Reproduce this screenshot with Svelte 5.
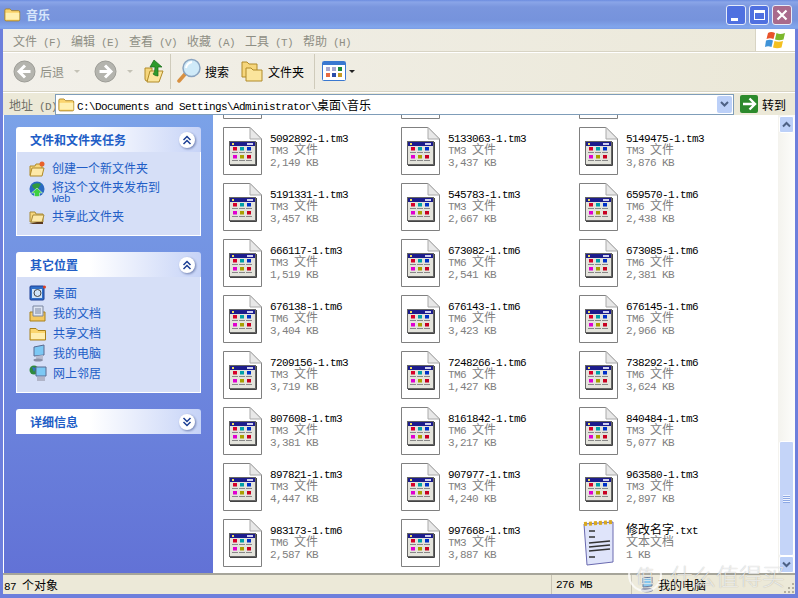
<script>
  const files = [
    ['', '', ''], ['', '', ''], ['', '', ''],
    ['5092892-1.tm3', 'TM3 文件', '2,149 KB'], ['5133063-1.tm3', 'TM3 文件', '3,437 KB'], ['5149475-1.tm3', 'TM3 文件', '3,876 KB'],
    ['5191331-1.tm3', 'TM3 文件', '3,457 KB'], ['545783-1.tm3', 'TM3 文件', '2,667 KB'], ['659570-1.tm6', 'TM6 文件', '2,438 KB'],
    ['666117-1.tm3', 'TM3 文件', '1,519 KB'], ['673082-1.tm6', 'TM6 文件', '2,541 KB'], ['673085-1.tm6', 'TM6 文件', '2,381 KB'],
    ['676138-1.tm6', 'TM6 文件', '3,404 KB'], ['676143-1.tm6', 'TM6 文件', '3,423 KB'], ['676145-1.tm6', 'TM6 文件', '2,966 KB'],
    ['7209156-1.tm3', 'TM3 文件', '3,719 KB'], ['7248266-1.tm6', 'TM6 文件', '1,427 KB'], ['738292-1.tm6', 'TM6 文件', '3,624 KB'],
    ['807608-1.tm3', 'TM3 文件', '3,381 KB'], ['8161842-1.tm6', 'TM6 文件', '3,217 KB'], ['840484-1.tm3', 'TM3 文件', '5,077 KB'],
    ['897821-1.tm3', 'TM3 文件', '4,447 KB'], ['907977-1.tm3', 'TM3 文件', '4,240 KB'], ['963580-1.tm3', 'TM3 文件', '2,897 KB'],
    ['983173-1.tm6', 'TM6 文件', '2,587 KB'], ['997668-1.tm3', 'TM3 文件', '3,887 KB'], ['修改名字.txt', '文本文档', '1 KB', 'txt'],
  ];

  const menus = ['文件 (F)', '编辑 (E)', '查看 (V)', '收藏 (A)', '工具 (T)', '帮助 (H)'];
  const places = [['桌面', 'desk'], ['我的文档', 'docs'], ['共享文档', 'folder'], ['我的电脑', 'pc'], ['网上邻居', 'net']];

  // ascii is 6px wide and cjk 12px, like the bitmap font in the screenshot
  const segs = (s) =>
    (s.match(/[\u4e00-\u9fff]+|[^\u4e00-\u9fff]+/g) || []).map((t) => ({ t, cjk: /[\u4e00-\u9fff]/.test(t) }));

  const swatches = [
    [10, 20, '#d8002a'], [17, 20, '#00a0a8'], [24, 20, '#0030c8'],
    [10, 28, '#e000d0'], [17, 28, '#a8a000'], [24, 28, '#c80020'],
  ];
</script>

{#snippet txt(s)}
  {#each segs(s) as seg}<span class={seg.cjk ? 'cjk' : 'asc'}>{seg.t}</span>{/each}
{/snippet}

{#snippet folder(size)}
  <svg width={size} height={size} viewBox="0 0 20 20">
    <path d="M1 16V5q0-1.500 1.500-1.500H7L9 5.500H17q1.500 0 1.500 1.500V16q0 1.500-1.500 1.500H2.500Q1 17.500 1 16Z" fill="#fbd56e" stroke="#a8801c" />
    <path d="M2 8H18V16H2Z" fill="#fff0b0" />
  </svg>
{/snippet}

{#snippet fileIcon()}
  <svg class="ficon" width="40" height="49" viewBox="0 0 40 49">
    <path d="M.5.500H27L38.500 12V47.500H.5Z" fill="#fff" stroke="#808080" />
    <path d="M27 .5V12H38.500Z" fill="#e8e8e8" stroke="#aaa" />
    <rect x="6.500" y="14.500" width="26" height="23" fill="#e4e4dc" stroke="#666" />
    <path d="M33.500 15V38.500H7" fill="none" stroke="#444" />
    <rect x="7" y="15" width="25" height="4" fill="#1c1c8c" />
    <rect x="9" y="16" width="2" height="2" fill="#f0e060" />
    <rect x="24" y="16" width="6" height="2" fill="#d0d0f0" />
    {#each swatches as [x, y, c]}
      <rect {x} {y} width="4" height="3.500" fill={c} />
      <rect x={x - 1} y={y + 5} width="6" height="1" fill="#888" />
    {/each}
  </svg>
{/snippet}

{#snippet noteIcon()}
  <svg class="ficon" width="40" height="49" viewBox="0 0 40 49">
    <path d="M5 5L34 3V43L8 46Z" fill="#dfe4fa" stroke="#6a6ab0" />
    <path d="M5 5L34 3" stroke="#d8a820" stroke-width="4" stroke-dasharray="3 2" />
    <path d="M10 12H16M10 18H16M10 24L31 22M10 28L31 26M10 32L31 30M10 38H16" stroke="#333" stroke-width="1.500" />
  </svg>
{/snippet}

{#snippet chevrons(up)}
  <span class="chev">
    <svg width="18" height="18" viewBox="0 0 18 18">
      <circle cx="9" cy="9" r="8" fill="#fff" />
      <path d={up ? 'M5.500 9L9 5.500L12.500 9M5.500 13L9 9.500L12.500 13' : 'M5.500 5L9 8.500L12.500 5M5.500 9L9 12.500L12.500 9'} fill="none" stroke="#1c3f94" stroke-width="1.500" />
    </svg>
  </span>
{/snippet}

{#snippet placeIcon(kind)}
  <svg width="18" height="18" viewBox="0 0 18 18">
    {#if kind === 'desk'}
      <rect x="1" y="2" width="14" height="14" rx="1" fill="#2f6fc8" stroke="#1c3f94" />
      <path d="M3 5H13V14H3Z" fill="#cfe4f8" />
      <circle cx="8.500" cy="9" r="3.500" fill="none" stroke="#444" />
      <circle cx="15.500" cy="3" r="1.500" fill="#e04020" />
    {:else if kind === 'docs'}
      <path d="M1 8H16V17H1Z" fill="#f4c860" stroke="#a8801c" />
      <path d="M4 2H14V12H4Z" fill="#dfe6f4" stroke="#7a86a0" />
      <path d="M6 5H12M6 7H12M6 9H12" stroke="#7a86a0" />
    {:else if kind === 'folder'}
      <path d="M1 16V4.500H7L9 6.500H16.500V16Z" fill="#fbd56e" stroke="#a8801c" />
      <path d="M2 9H16V15H2Z" fill="#ffeeb0" />
    {:else if kind === 'pc'}
      <path d="M5 3L15 1V11L5 12Z" fill="#7cc8f4" stroke="#5a6a90" />
      <path d="M7 12V16L14 17V11Z" fill="#b8bcd0" />
      <ellipse cx="9" cy="16" rx="4.500" ry="1.500" fill="#8a90a8" />
    {:else}
      <circle cx="5" cy="6" r="4.500" fill="#2e8a3c" />
      <path d="M3 3L7 4L5 8Z" fill="#2f6fc8" />
      <path d="M7 3H17V12H7Z" fill="#7cc8f4" stroke="#5a6a90" />
      <path d="M8 13H16V17H8Z" fill="#b0b4c8" />
    {/if}
  </svg>
{/snippet}

<div class="window">
  <header class="titlebar">
    {@render folder(17)}
    <span class="title">音乐</span>
    <div class="wbtns">
      <span class="wbtn"><i class="min"></i></span>
      <span class="wbtn"><i class="max"></i></span>
      <span class="wbtn close">
        <svg width="12" height="12" viewBox="0 0 12 12"><path d="M1.500 1.500L10.500 10.500M10.500 1.500L1.500 10.500" stroke="#fff" stroke-width="2.200" /></svg>
      </span>
    </div>
  </header>

  <nav class="menubar">
    <div class="menus">
      {#each menus as m}<span class="menu">{@render txt(m)}</span>{/each}
    </div>
    <div class="flag">
      <svg width="22" height="20" viewBox="0 0 22 20">
        <path d="M3 3Q6 1 10 3L8.500 9Q5 7.500 1.500 9Z" fill="#e8532a" />
        <path d="M11.500 3Q15 5 20 3L18.500 9.500Q14 11 10 9.500Z" fill="#7cb82c" />
        <path d="M1 10.500Q5 9 8 10.500L6.500 17Q3 15.500 0 17Z" fill="#3f93d8" />
        <path d="M9.500 11Q14 12.500 18 11L16.500 17.500Q12 19 8 17.500Z" fill="#f4c020" />
      </svg>
    </div>
  </nav>

  <div class="toolbar">
    <span class="round">
      <svg width="23" height="23" viewBox="0 0 23 23">
        <circle cx="11.500" cy="11.500" r="10.500" fill="#b4b4ae" stroke="#9c9c96" />
        <path d="M12 5.500L6 11.500L12 17.500M6.500 11.500H17.500" fill="none" stroke="#fff" stroke-width="3" />
      </svg>
    </span>
    <span class="tlabel muted">后退</span>
    <i class="caret pale back"></i>
    <span class="round fwd">
      <svg width="23" height="23" viewBox="0 0 23 23">
        <circle cx="11.500" cy="11.500" r="10.500" fill="#b4b4ae" stroke="#9c9c96" />
        <path d="M11 5.500L17 11.500L11 17.500M16.500 11.500H5.500" fill="none" stroke="#fff" stroke-width="3" />
      </svg>
    </span>
    <i class="caret pale nxt"></i>
    <span class="up">
      <svg width="20" height="24" viewBox="0 0 20 24">
        <path d="M1 9H8V22H3Q1 22 1 20Z" fill="#f6d67c" stroke="#b08a28" />
        <path d="M3 23L6 12H19L15 23Z" fill="#fbe59c" stroke="#b08a28" />
        <path d="M10 1L18 8H14V17Q11 17 9 15Q11 14 11 8H6Z" fill="#2e9a2c" stroke="#156a14" stroke-width=".7" />
      </svg>
    </span>
    <i class="sep"></i>
    <span class="search">
      <svg width="25" height="26" viewBox="0 0 25 26">
        <path d="M9 15L2 23" stroke="#d89040" stroke-width="3.500" stroke-linecap="round" />
        <circle cx="14.500" cy="10" r="8.500" fill="#cfeaf8" stroke="#8aa4c0" stroke-width="1.500" />
        <path d="M9 10Q10 5 15 4" fill="none" stroke="#fff" stroke-width="2" />
      </svg>
    </span>
    <span class="tlabel tight">搜索</span>
    <span class="folders">
      <svg width="23" height="22" viewBox="0 0 23 22">
        <path d="M1 17V2H6L8 4H16V17Z" fill="#f6d67c" stroke="#b08a28" />
        <path d="M5 21V8H10L12 10H21V21Z" fill="#fbe59c" stroke="#b08a28" />
      </svg>
    </span>
    <span class="tlabel">文件夹</span>
    <i class="sep s2"></i>
    <span class="views">
      <svg width="24" height="20" viewBox="0 0 24 20">
        <rect x=".5" y=".5" width="23" height="19" rx="1" fill="#fff" stroke="#3a78d0" />
        <rect x="1" y="1" width="22" height="3" fill="#3a78d0" />
        <g>
          <rect x="4" y="6" width="4" height="4" fill="#a8a8d0" /><rect x="10" y="6" width="4" height="4" fill="#a8a8d0" /><rect x="16" y="6" width="4" height="4" fill="#1c8a3c" />
          <rect x="4" y="12" width="4" height="4" fill="#e86a40" /><rect x="10" y="12" width="4" height="4" fill="#2a4ca8" /><rect x="16" y="12" width="4" height="4" fill="#c89a20" />
        </g>
      </svg>
    </span>
    <i class="caret dark"></i>
  </div>

  <div class="addrbar">
    <span class="addrlabel">{@render txt('地址 (D)')}</span>
    <div class="addrbox">
      {@render folder(17)}
      <span class="path">{@render txt('C:\\Documents and Settings\\Administrator\\桌面\\音乐')}</span>
      <span class="drop">
        <svg width="9" height="7" viewBox="0 0 9 7"><path d="M1 1L4.500 4.500L8 1" fill="none" stroke="#4d6185" stroke-width="2" /></svg>
      </span>
    </div>
    <span class="go">
      <svg width="18" height="18" viewBox="0 0 18 18">
        <rect width="18" height="18" rx="2" fill="#2c8a2c" />
        <path d="M9.500 3.500L15 9L9.500 14.500M14 9H3" fill="none" stroke="#fff" stroke-width="2.400" />
      </svg>
      <span class="golabel">转到</span>
    </span>
  </div>

  <main class="body">
    <aside class="side">
      <section class="panel">
        <div class="phead"><span>文件和文件夹任务</span>{@render chevrons(true)}</div>
        <div class="pbody tasks">
          <div class="task">
            <svg width="16" height="16" viewBox="0 0 16 16">
              <path d="M1 14V5H6L7 3H13V14Z" fill="#f6d67c" stroke="#b08a28" /><path d="M1 15L3 7H15L13 15Z" fill="#fde9a8" stroke="#b08a28" />
              <circle cx="13" cy="3" r="2.500" fill="#e8602a" />
            </svg>
            <span class="lnk">创建一个新文件夹</span>
          </div>
          <div class="task two">
            <svg width="16" height="16" viewBox="0 0 16 16">
              <circle cx="8" cy="8" r="7.500" fill="#2a6ac0" /><path d="M3 4Q7 1 12 3L9 8Q4 9 3 4Z" fill="#2e9a3c" />
              <path d="M8 7L13.500 12H10.500V15.500H5.500V12H2.500Z" fill="#3ed040" stroke="#fff" stroke-width=".5" />
            </svg>
            <span class="lnk">将这个文件夹发布到<br /><span class="web">Web</span></span>
          </div>
          <div class="task">
            <svg width="16" height="16" viewBox="0 0 16 16">
              <path d="M1 13V3H6L7 5H14V13Z" fill="#f6d67c" stroke="#a88a38" /><path d="M2 13L4 6H15L13 13Z" fill="#fde9a8" stroke="#a88a38" />
              <path d="M0 15L8 13H14V15Z" fill="#5a3a20" />
            </svg>
            <span class="lnk">共享此文件夹</span>
          </div>
        </div>
      </section>

      <section class="panel">
        <div class="phead"><span>其它位置</span>{@render chevrons(true)}</div>
        <div class="pbody places">
          {#each places as [label, kind]}
            <div class="place">{@render placeIcon(kind)}<span class="lnk">{label}</span></div>
          {/each}
        </div>
      </section>

      <section class="panel">
        <div class="phead"><span>详细信息</span>{@render chevrons(false)}</div>
      </section>
    </aside>

    <div class="list">
      <div class="grid">
        {#each files as [name, type, size, kind]}
          <div class="tile">
            {#if kind === 'txt'}{@render noteIcon()}{:else}{@render fileIcon()}{/if}
            <div class="meta">
              <div class="name">{@render txt(name)}</div>
              <div class="sub">{@render txt(type)}</div>
              <div class="sub">{@render txt(size)}</div>
            </div>
          </div>
        {/each}
      </div>
    </div>

    <div class="scroll">
      <span class="sbtn">
        <svg width="9" height="7" viewBox="0 0 9 7"><path d="M1 5.500L4.500 2L8 5.500" fill="none" stroke="#4d6185" stroke-width="2" /></svg>
      </span>
      <div class="track"></div>
      <div class="thumb"><i></i><i></i><i></i><i></i></div>
      <span class="sbtn">
        <svg width="9" height="7" viewBox="0 0 9 7"><path d="M1 1.500L4.500 5L8 1.500" fill="none" stroke="#4d6185" stroke-width="2" /></svg>
      </span>
    </div>
  </main>

  <footer class="status">
    <span class="count">{@render txt('87 个对象')}</span>
    <span class="cell mem">{@render txt('276 MB')}</span>
    <span class="cell pc">
      <svg width="14" height="16" viewBox="0 0 14 16">
        <path d="M3 1L12 0V9L3 10Z" fill="#7cc8f4" stroke="#5a6a90" />
        <ellipse cx="7" cy="13" rx="6" ry="2.500" fill="#8a90a8" />
      </svg>
      <span class="pclabel">我的电脑</span>
    </span>
    <svg class="grip" width="12" height="12" viewBox="0 0 12 12">
      <path d="M9 1h2v2H9ZM5 5h2v2H5ZM9 5h2v2H9ZM1 9h2v2H1ZM5 9h2v2H5ZM9 9h2v2H9Z" fill="#b4b0a0" />
    </svg>
  </footer>

  <div class="mark">
    <span class="seal">值</span>
    <span class="brand">什么值得买</span>
  </div>
</div>

<style>
  :global(body) {
    margin: 0;
    overflow: hidden;
  }

  .window {
    position: relative;
    width: 798px;
    height: 598px;
    box-sizing: border-box;
    display: flex;
    flex-direction: column;
    background: #6d7fdc;
    padding: 0 3px 4px 3px;
    font-family: "Liberation Mono", "Noto Sans CJK SC", monospace;
    font-size: 11px;
    overflow: hidden;
  }

  .cjk {
    font-family: "Noto Sans CJK SC", sans-serif;
    font-size: 12px;
  }

  .asc {
    font-family: "Liberation Mono", monospace;
    font-size: 11px;
    letter-spacing: -0.6px;
  }

  /* title bar */
  .titlebar {
    height: 29px;
    flex: none;
    margin: 0 -3px;
    padding-left: 4px;
    box-sizing: border-box;
    display: flex;
    align-items: center;
    gap: 5px;
    background: linear-gradient(#6c8cdf 0, #8aa5e8 2px, #7a96de 7px, #7693dc 20px, #82a6ec 27px, #7b9de6 29px);
  }

  .title {
    font-family: "Noto Sans CJK SC", sans-serif;
    font-size: 12px;
    font-weight: 700;
    color: #d8e6fb;
  }

  .wbtns {
    margin-left: auto;
    margin-right: 6px;
    display: flex;
    gap: 3px;
  }

  .wbtn {
    width: 20px;
    height: 20px;
    box-sizing: border-box;
    border: 1px solid #e6ecfa;
    border-radius: 3px;
    background: #4f70e0;
    display: flex;
    align-items: center;
    justify-content: center;
    position: relative;
  }

  .wbtn.close {
    background: #a96a8c;
  }

  .min {
    position: absolute;
    left: 4px;
    bottom: 3px;
    width: 7px;
    height: 3px;
    background: #fff;
  }

  .max {
    width: 11px;
    height: 10px;
    box-sizing: border-box;
    border: 1px solid #fff;
    border-top-width: 3px;
  }

  /* menu */
  .menubar {
    height: 23px;
    flex: none;
    display: flex;
    background: linear-gradient(90deg, #f1efe9, #ece9da);
    border-bottom: 1px solid #d8d4c4;
    box-sizing: border-box;
  }

  .menus {
    flex: 1;
    display: flex;
    align-items: center;
    padding-left: 10px;
    border-right: 1px solid #d8d4c4;
  }

  .menu {
    width: 58px;
    color: #8e8e84;
    white-space: nowrap;
  }

  .flag {
    width: 39px;
    background: #fff;
    display: flex;
    align-items: center;
    justify-content: center;
  }

  /* toolbar */
  .toolbar {
    height: 40px;
    flex: none;
    box-sizing: border-box;
    display: flex;
    align-items: center;
    padding: 0 0 2px 10px;
    border-top: 1px solid #fff;
    background: linear-gradient(90deg, #f2f0ea, #ebe8d8);
    border-bottom: 1px solid #d8d4c4;
  }

  .toolbar svg {
    display: block;
  }

  .tlabel {
    font-family: "Noto Sans CJK SC", sans-serif;
    font-size: 12px;
    color: #000;
    margin-left: 4px;
  }

  .tlabel.tight {
    margin-left: 3px;
  }

  .tlabel.muted {
    margin-left: 4px;
    color: #8e8e84;
  }

  .caret {
    width: 0;
    height: 0;
    border: 3px solid transparent;
    border-top: 3px solid #333;
    border-bottom-width: 0;
  }

  .caret.pale {
    border-top-color: #c4c2b6;
  }

  .caret.back {
    margin-left: 10px;
  }

  .caret.nxt {
    margin-left: 10px;
  }

  .caret.dark {
    border-width: 3px 3px 0;
    margin-left: 3px;
    border-top-color: #222;
  }

  .fwd {
    margin-left: 14px;
  }

  .up {
    margin-left: 11px;
  }

  .sep {
    width: 1px;
    height: 35px;
    margin: 0 6px 0 6px;
    background: #cfcbbb;
  }

  .sep.s2 {
    margin: 0 7px 0 10px;
  }

  .folders {
    margin-left: 12px;
  }

  /* address */
  .addrbar {
    height: 23px;
    flex: none;
    display: flex;
    align-items: center;
    background: #ece9d8;
    border-top: 1px solid #fff;
    box-sizing: border-box;
  }

  .addrlabel {
    width: 52px;
    flex: none;
    padding-left: 6px;
    box-sizing: border-box;
    color: #6f6f66;
    white-space: nowrap;
  }

  .addrbox {
    width: 679px;
    flex: none;
    height: 21px;
    box-sizing: border-box;
    border: 1px solid #7f9db9;
    background: #fff;
    display: flex;
    align-items: center;
    padding-left: 2px;
    gap: 2px;
    color: #000;
  }

  .path {
    white-space: nowrap;
  }

  .drop {
    margin-left: auto;
    margin-right: 1px;
    width: 15px;
    height: 17px;
    border-radius: 2px;
    background: #bcd0f8;
    display: flex;
    align-items: center;
    justify-content: center;
  }

  .go {
    margin-left: 6px;
    display: flex;
    align-items: center;
    gap: 4px;
  }

  .golabel {
    font-family: "Noto Sans CJK SC", sans-serif;
    font-size: 12px;
    color: #000;
  }

  /* main area */
  .body {
    flex: 1;
    min-height: 0;
    display: flex;
    background: #fff;
  }

  .side {
    width: 209px;
    flex: none;
    margin-left: 1px;
    padding: 12px 12px 0;
    box-sizing: border-box;
    display: flex;
    flex-direction: column;
    gap: 16px;
    background: linear-gradient(#7ba2e8, #6272d6);
  }

  .panel {
    width: 185px;
  }

  .phead {
    height: 25px;
    box-sizing: border-box;
    padding: 0 5px 0 14px;
    display: flex;
    align-items: center;
    justify-content: space-between;
    border-radius: 3px 3px 0 0;
    background: linear-gradient(90deg, #fff 40%, #c6d3f7);
    font-family: "Noto Sans CJK SC", sans-serif;
    font-size: 12px;
    font-weight: 700;
    color: #215dc6;
  }

  .chev {
    display: flex;
    filter: drop-shadow(1px 1px 1px #7080b0);
  }

  .pbody {
    box-sizing: border-box;
    background: #d6dff7;
    border: 1px solid #fff;
    border-top: 0;
    display: flex;
    flex-direction: column;
    padding: 6px 0 0 12px;
  }

  .tasks {
    height: 84px;
    padding-top: 8px;
    gap: 3px;
  }

  .places {
    height: 116px;
    padding-top: 7px;
    gap: 2px;
  }

  .task,
  .place {
    display: flex;
    gap: 7px;
    align-items: flex-start;
  }

  .place {
    height: 18px;
    align-items: center;
    gap: 6px;
  }

  .task svg {
    flex: none;
    margin-top: 1px;
  }

  .task.two {
    height: 25px;
  }

  .lnk {
    font-family: "Noto Sans CJK SC", sans-serif;
    font-size: 12px;
    line-height: 16px;
    color: #215dc6;
  }

  .task.two .lnk {
    line-height: 14px;
    display: block;
  }

  .web {
    font-family: "Liberation Mono", monospace;
    font-size: 11px;
    letter-spacing: -0.6px;
    line-height: 10px;
    display: block;
  }

  /* file grid */
  .list {
    flex: 1;
    min-width: 0;
    overflow: hidden;
    position: relative;
  }

  .grid {
    display: grid;
    grid-template-columns: repeat(3, 178px);
    grid-auto-rows: 56px;
    margin: -44px 0 0 10px;
  }

  .tile {
    display: flex;
    gap: 7px;
    align-items: flex-start;
  }

  .ficon {
    flex: none;
    display: block;
  }

  .meta {
    padding-top: 6px;
    white-space: nowrap;
  }

  /* keeps the taller cjk glyphs from pushing the baseline of a 12px row */
  .meta :global(.cjk) {
    line-height: 0;
  }

  .name,
  .sub {
    height: 12px;
    line-height: 12px;
    color: #000;
  }

  .sub {
    color: #808080;
  }

  /* scrollbar */
  .scroll {
    width: 17px;
    flex: none;
    display: flex;
    flex-direction: column;
    padding-top: 1px;
    background: linear-gradient(90deg, #f4f3ee, #fdfdfb);
  }

  .sbtn {
    height: 17px;
    flex: none;
    margin: 0 1px;
    border: 1px solid #fff;
    border-radius: 2px;
    background: #bcd0f8;
    box-sizing: border-box;
    display: flex;
    align-items: center;
    justify-content: center;
  }

  .track {
    flex: 1;
  }

  .thumb {
    height: 115px;
    margin: 0 1px;
    box-sizing: border-box;
    border: 1px solid #fff;
    border-radius: 2px;
    background: #c4d4f8;
    display: flex;
    flex-direction: column;
    justify-content: center;
    align-items: center;
    gap: 1px;
  }

  .thumb i {
    width: 7px;
    height: 1px;
    background: #eef3fe;
    box-shadow: 0 1px 0 #8ca8e4;
  }

  /* status bar */
  .status {
    height: 21px;
    flex: none;
    display: flex;
    align-items: center;
    background: #ece9d8;
    box-sizing: border-box;
    border-top: 2px solid #a6a59a;
    color: #000;
  }

  .count {
    width: 548px;
    flex: none;
    padding-left: 1px;
    box-sizing: border-box;
    white-space: nowrap;
  }

  .cell {
    height: 100%;
    display: flex;
    align-items: center;
    box-sizing: border-box;
    border-left: 1px solid #c8c4b4;
    white-space: nowrap;
  }

  .mem {
    width: 80px;
    padding-left: 4px;
  }

  .pc {
    padding-left: 8px;
    gap: 4px;
  }

  .pclabel {
    font-family: "Noto Sans CJK SC", sans-serif;
    font-size: 12px;
  }

  .grip {
    margin-left: auto;
    align-self: flex-end;
    flex: none;
  }

  /* watermark over the bottom right corner */
  .mark {
    position: absolute;
    left: 628px;
    top: 558px;
    display: flex;
    align-items: center;
    gap: 8px;
    color: rgba(255, 255, 255, 0.72);
    font-family: "Noto Sans CJK SC", sans-serif;
    text-shadow: 0 0 1px rgba(0, 0, 0, 0.3);
  }

  .seal {
    width: 30px;
    height: 30px;
    border-radius: 50%;
    border: 2px solid rgba(255, 255, 255, 0.7);
    display: flex;
    align-items: center;
    justify-content: center;
    font-size: 18px;
    background: rgba(255, 255, 255, 0.12);
  }

  .brand {
    font-size: 23px;
    line-height: 30px;
    white-space: nowrap;
    font-weight: 300;
  }
</style>
